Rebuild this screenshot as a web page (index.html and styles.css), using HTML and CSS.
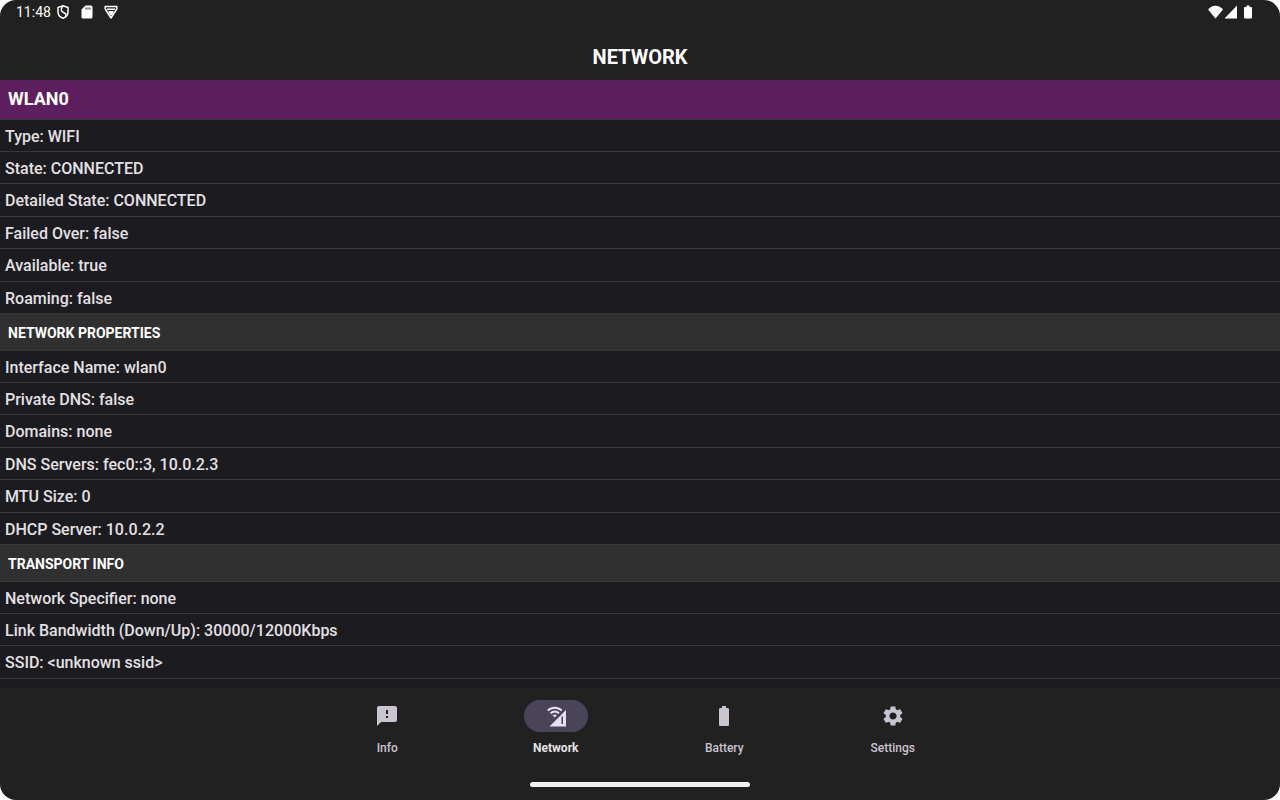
FILE: index.html
```html
<!DOCTYPE html>
<html lang="en">
<head>
    <meta charset="utf-8">
    <meta name="viewport" content="width=device-width, initial-scale=1.0">
    <title>Network</title>
    <link rel="stylesheet" href="styles.css">
</head>
<body>
    <div class="screen">
        <div class="status-bar">
            <div class="status-left">
                <span class="clock">11:48</span>
                <svg class="status-icon" viewBox="0 0 16 16" fill="none" stroke="#fff" stroke-width="1.5">
                    <path d="M8 1.800L13 3.600V8c0 3-2.200 5.200-5 6.200C5.200 13.200 3 11 3 8V3.600z"/>
                    <path d="M7.800 2C5.500 6 6 7.500 8.500 8.500s3 2 2 4"/>
                </svg>
                <svg class="status-icon" viewBox="0 0 16 16">
                    <path fill="#fff" d="M6.500 1.500H12A1.500 1.500 0 0 1 13.500 3v10a1.500 1.500 0 0 1-1.500 1.500H4A1.500 1.500 0 0 1 2.500 13V5.500z"/>
                    <path stroke="#212121" d="M7 3.500v2M9 3.500v2M11 3.500v2"/>
                </svg>
                <svg class="status-icon" viewBox="0 0 16 16" fill="none" stroke="#fff" stroke-width="1.500" stroke-linejoin="round">
                    <path d="M2.200 2.500h11.600v2.500L8 14 2.200 5z"/>
                    <path d="M4 5.200h8"/>
                    <path fill="#fff" stroke="none" d="M5.500 7h5v1.500L8 12 5.500 8.500z"/>
                </svg>
            </div>
            <div class="status-right">
                <svg class="status-icon" viewBox="0 0 16 16" fill="#fff"><path d="M7.500 14.500L0 5.600C2 3.100 4.500 1.800 7.500 1.800s5.500 1.300 7.500 3.800z"/></svg>
                <svg class="status-icon" viewBox="0 0 16 16" fill="#fff"><path d="M13 1.500v13H.500z"/></svg>
                <svg class="status-icon" viewBox="0 0 16 16" fill="#fff"><path d="M6.500 1.500h3V3H11a1 1 0 0 1 1 1v9.500a1 1 0 0 1-1 1H5a1 1 0 0 1-1-1V4a1 1 0 0 1 1-1h1.500z"/></svg>
            </div>
        </div>

        <header class="app-bar">
            <h1 class="title">NETWORK</h1>
        </header>

        <main class="content">
            <h2 class="interface-title">WLAN0</h2>
            <ul class="props">
                <li>Type: WIFI</li>
                <li>State: CONNECTED</li>
                <li>Detailed State: CONNECTED</li>
                <li>Failed Over: false</li>
                <li>Available: true</li>
                <li>Roaming: false</li>
            </ul>

            <h3 class="section-title">NETWORK PROPERTIES</h3>
            <ul class="props">
                <li>Interface Name: wlan0</li>
                <li>Private DNS: false</li>
                <li>Domains: none</li>
                <li>DNS Servers: fec0::3, 10.0.2.3</li>
                <li>MTU Size: 0</li>
                <li>DHCP Server: 10.0.2.2</li>
            </ul>

            <h3 class="section-title">TRANSPORT INFO</h3>
            <ul class="props">
                <li>Network Specifier: none</li>
                <li>Link Bandwidth (Down/Up): 30000/12000Kbps</li>
                <li>SSID: &lt;unknown ssid&gt;</li>
            </ul>
        </main>

        <div class="bottom">
            <nav class="tabs">
                <button class="tab" type="button">
                    <span class="tab-icon">
                        <svg viewBox="0 0 24 24"><path d="M20 2H4c-1.100 0-2 .900-2 2v18l4-4h14c1.100 0 2-.900 2-2V4c0-1.100-.900-2-2-2zm-7 12h-2v-2h2v2zm0-4h-2V6h2v4z"/></svg>
                    </span>
                    <span>Info</span>
                </button>
                <button class="tab active" type="button" aria-current="page">
                    <span class="tab-icon">
                        <svg viewBox="0 0 24 24">
                            <path fill-rule="evenodd" d="M22 6v16.500H5.500zM17.500 12.500V20H19v-7.500z"/>
                            <g fill="none" stroke="#e8def8" stroke-width="2">
                                <path d="M3.800 6.600C7.500 2.800 14 2.800 17.700 6.600"/>
                                <path d="M6.500 9.300C9 7 12.500 7 15 9.300"/>
                            </g>
                            <path d="M10.700 13.500L8.500 11.300c1.300-1.200 3.100-1.200 4.400 0z"/>
                        </svg>
                    </span>
                    <span>Network</span>
                </button>
                <button class="tab" type="button">
                    <span class="tab-icon">
                        <svg viewBox="0 0 24 24"><path d="M15.670 4H14V2h-4v2H8.330C7.600 4 7 4.600 7 5.330v15.330C7 21.400 7.600 22 8.330 22h7.330c.740 0 1.340-.600 1.340-1.330V5.330C17 4.600 16.400 4 15.670 4z"/></svg>
                    </span>
                    <span>Battery</span>
                </button>
                <button class="tab" type="button">
                    <span class="tab-icon">
                        <svg viewBox="0 0 24 24"><path d="M19.140 12.940c.040-.300.060-.610.060-.940 0-.320-.020-.640-.070-.940l2.030-1.580c.180-.140.230-.410.120-.610l-1.920-3.320c-.120-.220-.370-.290-.590-.220l-2.390.960c-.500-.380-1.030-.700-1.620-.940l-.360-2.540c-.040-.240-.240-.410-.480-.410h-3.840c-.240 0-.430.170-.470.410l-.360 2.540c-.590.240-1.130.570-1.620.940l-2.390-.960c-.220-.080-.470 0-.590.220L2.740 8.870c-.120.210-.080.470.120.610l2.030 1.580c-.050.300-.090.630-.090.940s.020.640.070.940l-2.030 1.580c-.180.140-.230.410-.120.610l1.920 3.320c.120.220.370.290.590.220l2.390-.960c.500.380 1.030.700 1.620.940l.360 2.540c.050.240.240.410.480.410h3.840c.240 0 .440-.170.470-.410l.360-2.540c.590-.240 1.130-.560 1.620-.940l2.390.960c.220.080.470 0 .590-.220l1.920-3.320c.120-.220.070-.470-.120-.610l-2.010-1.580zM12 15.600c-1.980 0-3.600-1.620-3.600-3.600s1.620-3.600 3.600-3.600 3.600 1.620 3.600 3.600-1.620 3.600-3.600 3.600z"/></svg>
                    </span>
                    <span>Settings</span>
                </button>
            </nav>
            <div class="home-handle"></div>
        </div>
    </div>
</body>
</html>
```
FILE: styles.css
```css
* {
    box-sizing: border-box;
}

body {
    margin: 0;
    background: #ffffff;
    font-family: Roboto, "Liberation Sans", sans-serif;
    font-size: 16px;
    color: #e3e0e4;
}

.screen {
    display: flex;
    flex-direction: column;
    height: 100vh;
    border-radius: 16px;
    overflow: hidden;
    background: #212121;
}

/* Status bar */
.status-bar {
    display: flex;
    justify-content: space-between;
    height: 24px;
    padding: 0 24px 0 16px;
    color: #ffffff;
}

.status-left,
.status-right {
    display: flex;
    align-items: center;
}

.status-left {
    gap: 8px;
}

.clock {
    font-size: 14px;
    margin-right: -4px;
}

.status-icon {
    display: block;
    width: 16px;
    height: 16px;
}

.app-bar {
    display: flex;
    align-items: center;
    justify-content: center;
    height: 56px;
    padding-top: 12px;
    padding-bottom: 2px;
}

.title {
    margin: 0;
    font-size: 20px;
    line-height: 24px;
    font-weight: 700;
    color: #ffffff;
}

/* Property list */
.content {
    flex: 1;
    min-height: 0;
    overflow-y: auto;
    background: #1c1b1f;
}

.interface-title,
.section-title {
    margin: 0;
    padding: 0 8px;
    line-height: 38px;
    font-weight: 700;
    color: #ffffff;
    border-bottom: 1px solid #38373a;
}

.interface-title {
    height: 40px;
    font-size: 18px;
    background: #5e1f5e;
}

.section-title {
    height: 37px;
    font-size: 14px;
    background: #303030;
}

.props {
    margin: 0;
    padding: 0;
    list-style: none;
}

.props li {
    height: 32px;
    padding: 0 5px;
    line-height: 34px;
    font-weight: 500;
    border-bottom: 1px solid #38373a;
}

.props li:nth-child(2n+3) {
    height: 33px;
}

/* Bottom navigation */
.bottom {
    display: flex;
    flex-direction: column;
    align-items: center;
    justify-content: space-between;
    height: 112px;
    padding: 12px 0 13px;
}

.tabs {
    display: flex;
    width: 100%;
    max-width: 674px;
}

.tab {
    display: flex;
    flex: 1;
    flex-direction: column;
    align-items: center;
    gap: 8px;
    padding: 0;
    border: none;
    background: none;
    font-family: inherit;
    font-size: 12px;
    line-height: 16px;
    font-weight: 500;
    color: #cac4d0;
    cursor: pointer;
}

.tab-icon {
    display: flex;
    align-items: center;
    justify-content: center;
    width: 64px;
    height: 32px;
    border-radius: 16px;
}

.tab-icon svg {
    width: 24px;
    height: 24px;
    fill: #cac4d0;
}

.tab.active {
    font-weight: 700;
    color: #e6e1e5;
}

.tab.active .tab-icon {
    background: #4a4458;
}

.tab.active .tab-icon svg {
    fill: #e8def8;
}

.home-handle {
    width: 220px;
    height: 5px;
    border-radius: 3px;
    background: #f1f1f1;
}
```
